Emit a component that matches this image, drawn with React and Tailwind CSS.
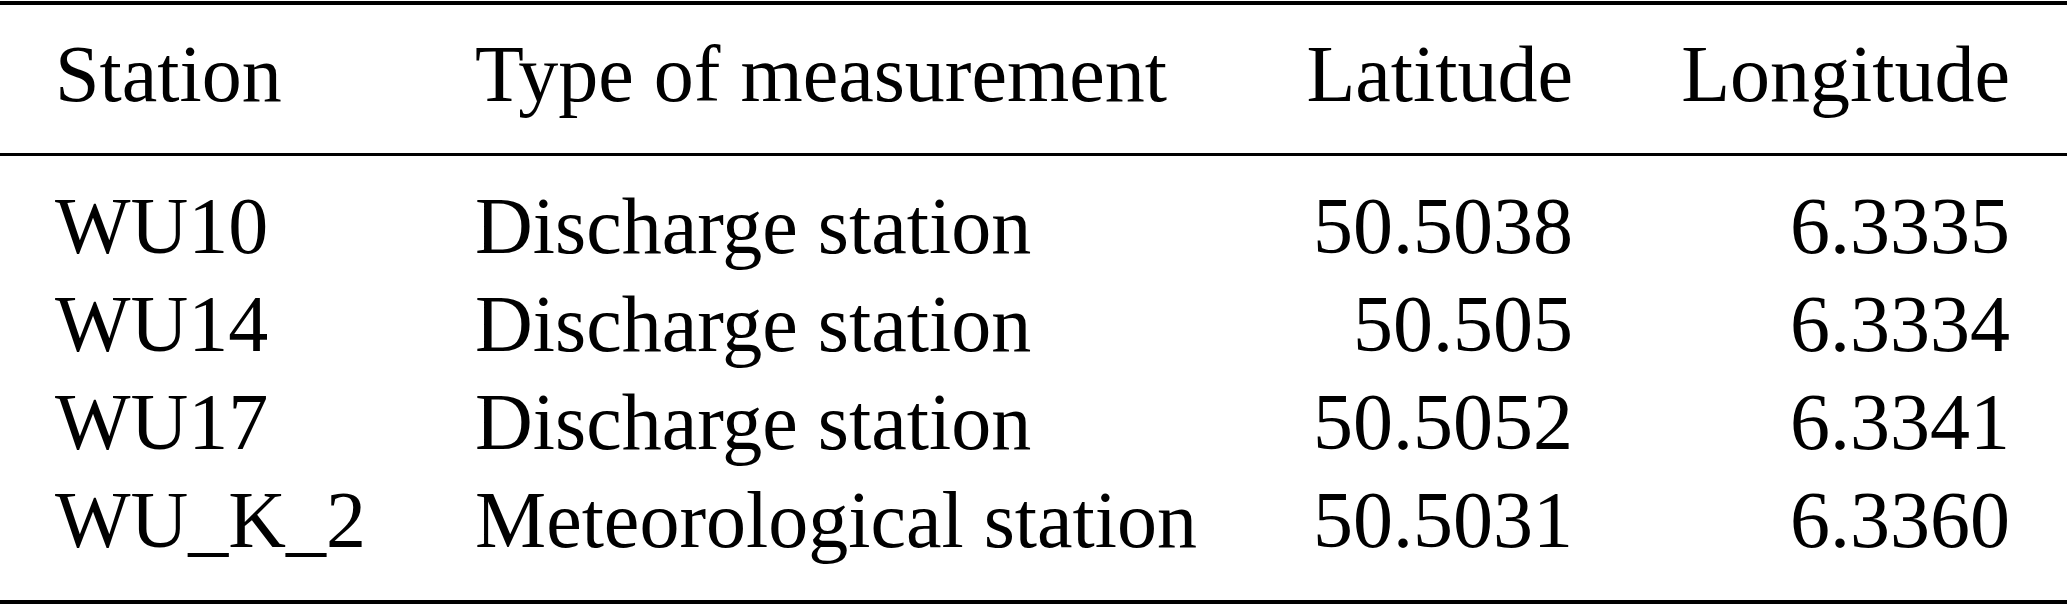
import React from 'react';

const ROWS = [
  { station: 'WU10', type: 'Discharge station', lat: '50.5038', lon: '6.3335' },
  { station: 'WU14', type: 'Discharge station', lat: '50.505', lon: '6.3334' },
  { station: 'WU17', type: 'Discharge station', lat: '50.5052', lon: '6.3341' },
  { station: 'WU_K_2', type: 'Meteorological station', lat: '50.5031', lon: '6.3360' },
];

const cols = 'grid grid-cols-[420px_798px_300px_437px] pl-[55px] pr-[57px]';

export default function App() {
  return (
    <div className="w-[2067px] h-[605px] bg-white text-black pt-px font-['Liberation_Serif','Times_New_Roman',serif]">
      {/* top rule */}
      <div className="h-[4px] bg-black" />

      {/* header */}
      <div className={`${cols} mt-[20px] text-[80px] leading-[98px] whitespace-nowrap`}>
        <div>Station</div>
        <div>Type of measurement</div>
        <div className="text-right">Latitude</div>
        <div className="text-right">Longitude</div>
      </div>

      {/* mid rule */}
      <div className="h-[3px] bg-black mt-[30px]" />

      {/* body */}
      <div className="mt-[21px]">
        {ROWS.map((row) => (
          <div key={row.station} className={`${cols} text-[80px] leading-[98px] whitespace-nowrap`}>
            <div>{row.station}</div>
            <div>{row.type}</div>
            <div className="text-right">{row.lat}</div>
            <div className="text-right">{row.lon}</div>
          </div>
        ))}
      </div>

      {/* bottom rule */}
      <div className="h-[4px] bg-black mt-[31px]" />
    </div>
  );
}
